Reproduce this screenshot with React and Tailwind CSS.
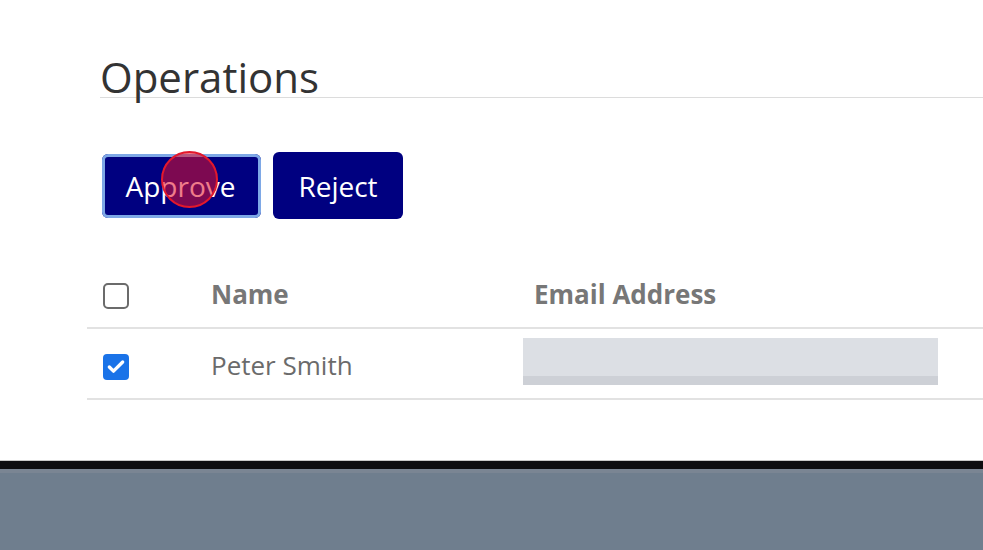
import { Check } from 'lucide-react';

const Checkbox = ({ checked }) => {
  if (checked) {
    return (
      <div className="w-[26px] h-[26px] rounded-[4px] bg-[#1a73e8] flex items-center justify-center">
        <Check size={20} strokeWidth={4} className="text-white" />
      </div>
    );
  }
  return <div className="w-[26px] h-[26px] rounded-[5px] border-2 border-[#6b6b6b] bg-white" />;
};

export default function App() {
  return (
    <div className="min-h-[550px] flex flex-col bg-white font-['Open_Sans',sans-serif]">
      <div className="h-[460px] pl-[100px] pt-[56px] overflow-hidden">
        {/* Heading */}
        <h1 className="text-[42px] leading-[41px] text-[#333] border-b border-[#dcdcdc]">Operations</h1>

        {/* Actions */}
        <div className="mt-[54px] ml-[2px] flex items-center gap-3">
          <div className="relative">
            <button className="h-[64px] w-[159px] rounded-[6px] bg-[#000080] ring-[3px] ring-inset ring-[#7ea8e6] text-white text-[28px] pr-[2px]">
              Approve
            </button>
            {/* click indicator */}
            <div className="absolute left-[59px] top-[-3px] w-[57px] h-[57px] rounded-full border-2 border-[#e3182c] bg-[#e3102a]/55 pointer-events-none" />
          </div>
          <button className="h-[67px] w-[130px] rounded-[6px] bg-[#000080] text-white text-[28px]">Reject</button>
        </div>

        {/* Table */}
        <div className="-ml-[13px] mt-[42px]">
          <div className="grid grid-cols-[124px_323px_1fr] h-[68px] items-center border-b-2 border-[#e2e2e2]">
            <div className="pl-[16px] pt-[3px]">
              <Checkbox />
            </div>
            <div className="text-[26px] font-bold text-[#777]">Name</div>
            <div className="text-[26px] font-bold text-[#777]">Email Address</div>
          </div>
          <div className="grid grid-cols-[124px_323px_1fr] h-[71px] items-center border-b-2 border-[#e2e2e2]">
            <div className="pl-[16px] pt-[6px]">
              <Checkbox checked />
            </div>
            <div className="text-[26px] text-[#6b6b6b] pt-[3px]">Peter Smith</div>
            <div className="-ml-[11px] -mt-[5px]">
              <div className="w-[415px] h-[47px] bg-[#dcdfe4] border-b-[9px] border-[#cdd0d6]" />
            </div>
          </div>
        </div>
      </div>
      <div className="h-[9px] bg-[#0d0d10] border-t border-[#c8c8c8]" />
      <div className="h-[4px] bg-[#7a8593]" />
      <div className="flex-1 bg-[#6f7e8e]" />
    </div>
  );
}
